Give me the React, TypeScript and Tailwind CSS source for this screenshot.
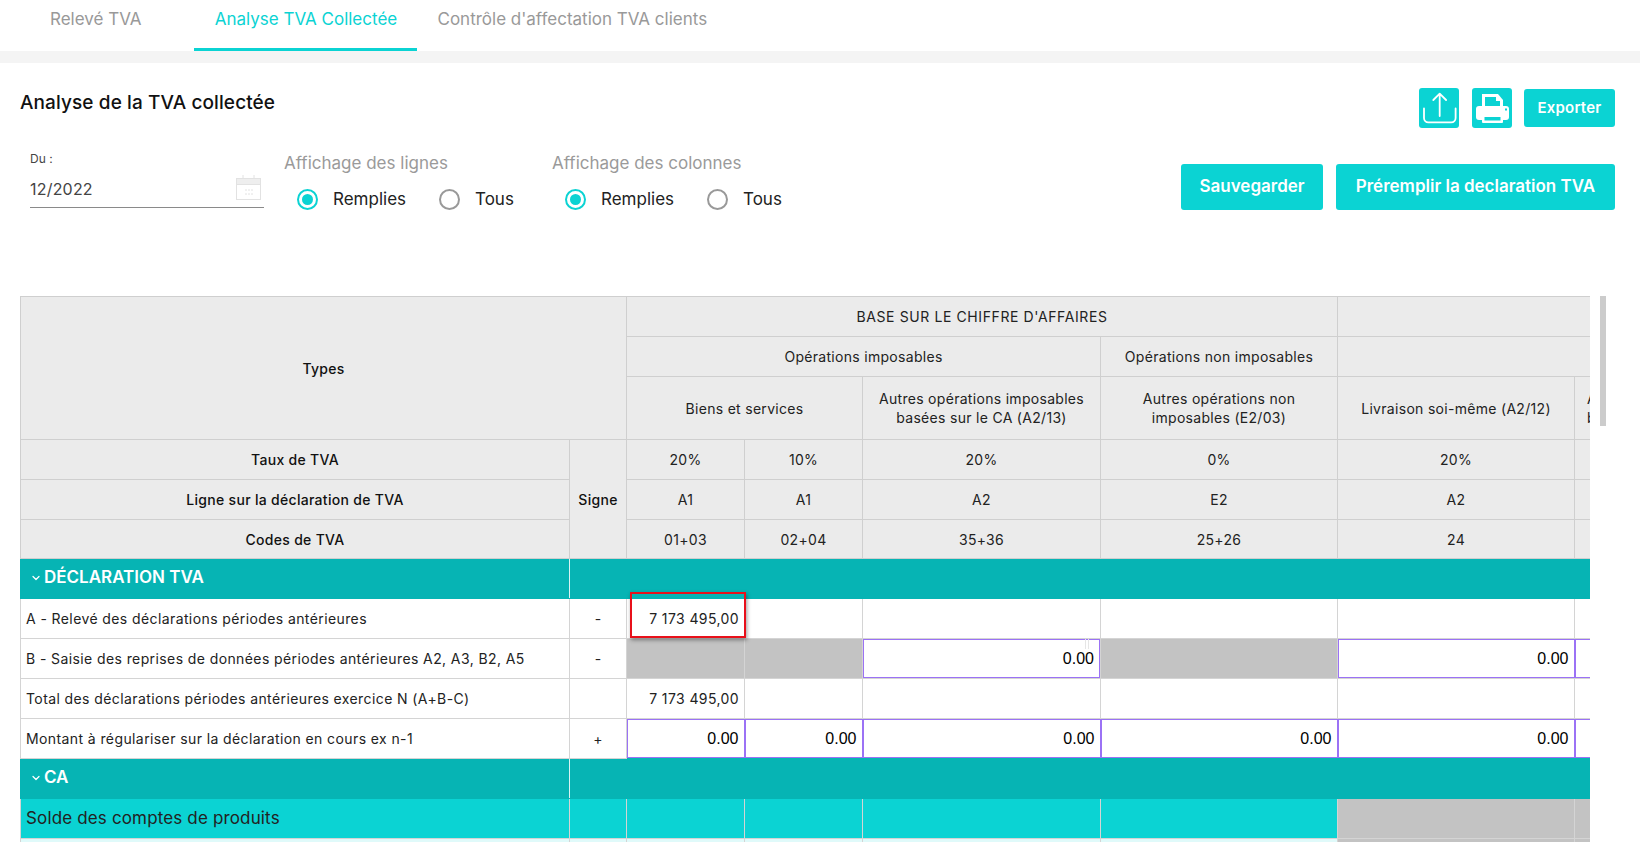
import React from 'react';
import { ChevronDown } from 'lucide-react';

const TEAL = 'bg-[#0bd3d3]';

const Radio = ({ label, checked }: { label: string; checked?: boolean }) => (
    <label className="flex items-center gap-[15px] text-[17px] text-[#222]">
        <span className={`flex h-[21px] w-[21px] items-center justify-center rounded-full border-2 ${checked ? 'border-[#0bd3d3]' : 'border-[#999]'}`}>
            {checked && <span className="h-[11px] w-[11px] rounded-full bg-[#0bd3d3]" />}
        </span>
        {label}
    </label>
);

const RadioGroup = ({ title, className }: { title: string; className: string }) => (
    <div className={className}>
        <div className="text-[17px] leading-[20px] text-[#9a9a9a]">{title}</div>
        <div className="mt-[14px] ml-[13px] flex items-center gap-[33px]">
            <Radio label="Remplies" checked />
            <Radio label="Tous" />
        </div>
    </div>
);

const CalendarIcon = () => (
    <svg width="26" height="26" viewBox="0 0 26 26" fill="none" stroke="#e2e2e2" strokeWidth="1">
        <rect x="0.5" y="3.5" width="24" height="21" />
        <rect x="0.5" y="3.5" width="24" height="6" fill="#eeeeee" />
        <path d="M7 0v4M18 0v4M9 15h2M12 15h2M15 15h2M9 19h2M12 19h2M15 19h2" />
    </svg>
);

const UploadIcon = () => (
    <svg width="40" height="40" viewBox="0 0 40 40" fill="none" stroke="#fff" strokeWidth="1.8" strokeLinecap="round" strokeLinejoin="round">
        <path d="M20.7 6v22M14.3 12l6.4-6.3 6.4 6.3" />
        <path d="M5 20.5v9.5a4.3 4.3 0 0 0 4.3 4.3h23a4.3 4.3 0 0 0 4.3-4.3v-9.5" />
    </svg>
);

const PrintIcon = () => (
    <svg width="40" height="40" viewBox="0 0 40 40">
        <path d="M10 6h16l5 6v9H10z" fill="#fff" />
        <path d="M13 9h11v4h4v7H13z" fill="#0bd3d3" />
        <rect x="4" y="18" width="33" height="14" rx="3" fill="#fff" />
        <rect x="10" y="25" width="21" height="10" rx="1" fill="#fff" />
        <rect x="12.5" y="29" width="16" height="3.5" fill="#0bd3d3" />
        <rect x="33" y="20.5" width="2" height="2" fill="#0bd3d3" />
    </svg>
);

const th = 'border border-[#cfcfcf] bg-[#ebebeb] px-1 text-center align-middle text-[14px] font-normal leading-[19px] tracking-[0.3px] text-[#222]';
const thStrong = 'border border-[#cfcfcf] bg-[#ebebeb] px-1 text-center align-middle text-[14px] font-medium leading-[19px] tracking-[0.3px] text-[#111]';
const td = 'border border-[#d4d4d4] bg-white px-[5px] align-middle text-[14px] tracking-[0.4px] text-[#222]';
const tdGrey = 'border border-[#d4d4d4] bg-[#c3c3c3]';
const tdSigne = 'border border-[#d4d4d4] bg-white text-center align-middle text-[14px] text-[#222]';
const tdSolde = 'border border-[#d4d4d4] bg-[#0bd3d3]';
const tdPale = 'border border-[#d4d4d4] bg-[#e0fafa]';

const AmountInput = ({ tick }: { tick?: boolean }) => (
    <td className="relative border-x-0 border-t border-b-0 border-[#d4d4d4] bg-white p-0">
        <input
            readOnly
            value="0.00"
            className="block h-[39px] w-full border border-[#9b72f5] bg-white pr-[5px] text-right text-[16px] text-black outline-none font-['Liberation_Sans',sans-serif]"
        />
        {/* small leftover mark on the top border in the capture */}
        {tick && <span className="absolute top-0 right-[11px] h-[10px] w-[4px] border-x border-[#e6e6e6]" />}
    </td>
);

const SectionRow = ({ title }: { title: string }) => (
    <tr className="h-[40px]">
        <td className="border border-[#06b4b4] border-r-[#d9f3f3] bg-[#06b4b4] pb-[2px] pl-[9px] text-white">
            <div className="flex items-center gap-[2px] text-[17px] font-semibold">
                <ChevronDown size={12} strokeWidth={2.5} />
                {title}
            </div>
        </td>
        <td colSpan={7} className="border border-[#06b4b4] bg-[#06b4b4]" />
    </tr>
);

const App: React.FC = () => {
    return (
        <div className="h-[842px] w-[1640px] overflow-hidden bg-white font-['Inter',sans-serif]">
            {/* Tabs */}
            <div className="flex h-[51px] pl-[30px] text-[17px]">
                <div className="flex h-full items-center px-5 pb-[11px] text-[#999]">Relevé TVA</div>
                <div className="ml-[33px] flex h-full w-[223px] items-center justify-center border-b-[3px] border-[#0bd3d3] pb-[8px] text-[#0bd3d3]">
                    Analyse TVA Collectée
                </div>
                <div className="flex h-full items-center px-5 pb-[11px] text-[#999]">Contrôle d'affectation TVA clients</div>
            </div>
            <div className="h-[12px] bg-[#f4f4f4]" />

            <div className="pt-[25px] pl-[20px]">
                {/* Title and icon buttons */}
                <div className="flex h-[40px] items-start justify-between pr-[25px]">
                    <h1 className="mt-[4px] text-[19px] leading-[22px] font-medium tracking-[0.1px] text-[#111]">Analyse de la TVA collectée</h1>
                    <div className="flex items-center">
                        <button className={`flex h-[40px] w-[40px] items-center justify-center rounded-[3px] ${TEAL}`}>
                            <UploadIcon />
                        </button>
                        <button className={`ml-[13px] flex h-[40px] w-[40px] items-center justify-center rounded-[3px] ${TEAL}`}>
                            <PrintIcon />
                        </button>
                        <button className={`ml-[12px] h-[38px] w-[91px] rounded-[3px] text-[15px] font-semibold tracking-[0.2px] text-white ${TEAL}`}>
                            Exporter
                        </button>
                    </div>
                </div>

                {/* Filters */}
                <div className="mt-[22px] flex h-[138px] items-start pr-[25px]">
                    <div className="ml-[10px] w-[234px]">
                        <div className="mt-[1px] text-[12px] leading-[16px] text-[#444]">Du :</div>
                        <div className="mt-[7px] flex h-[34px] items-center justify-between border-b border-[#8a8a8a] pr-[2px] pb-[3px] text-[16px] tracking-[0.2px] text-[#444]">
                            12/2022
                            <span className="-mt-[3px]">
                                <CalendarIcon />
                            </span>
                        </div>
                    </div>
                    <RadioGroup title="Affichage des lignes" className="mt-[3px] ml-[20px] w-[268px]" />
                    <RadioGroup title="Affichage des colonnes" className="mt-[3px]" />
                    <div className="mt-[14px] ml-auto flex gap-[13px]">
                        <button className={`h-[46px] w-[142px] rounded-[3px] text-[17px] font-semibold text-white ${TEAL}`}>Sauvegarder</button>
                        <button className={`h-[46px] w-[279px] rounded-[3px] text-[17px] font-semibold text-white ${TEAL}`}>
                            Préremplir la declaration TVA
                        </button>
                    </div>
                </div>

                {/* Table */}
                <div className="mt-[8px] flex items-start gap-[10px]">
                    <div className="w-[1570px] overflow-hidden">
                        <table className="w-[1791px] table-fixed border-collapse">
                            <colgroup>
                                <col className="w-[549px]" />
                                <col className="w-[57px]" />
                                <col className="w-[118px]" />
                                <col className="w-[118px]" />
                                <col className="w-[238px]" />
                                <col className="w-[237px]" />
                                <col className="w-[237px]" />
                                <col className="w-[237px]" />
                            </colgroup>
                            <thead>
                                <tr className="h-[40px]">
                                    <th rowSpan={3} colSpan={2} className={thStrong}>Types</th>
                                    <th colSpan={4} className={`${th} tracking-[0.6px]`}>BASE SUR LE CHIFFRE D'AFFAIRES</th>
                                    <th colSpan={2} className={th} />
                                </tr>
                                <tr className="h-[40px]">
                                    <th colSpan={3} className={th}>Opérations imposables</th>
                                    <th className={th}>Opérations non imposables</th>
                                    <th colSpan={2} className={th} />
                                </tr>
                                <tr className="h-[63px]">
                                    <th colSpan={2} className={th}>Biens et services</th>
                                    <th className={th}>Autres opérations imposables<br />basées sur le CA (A2/13)</th>
                                    <th className={th}>Autres opérations non<br />imposables (E2/03)</th>
                                    <th className={th}>Livraison soi-même (A2/12)</th>
                                    <th className={`${th} text-left pl-[12px]`}>Autres opérations<br />basées sur le CA</th>
                                </tr>
                                <tr className="h-[40px]">
                                    <th className={thStrong}>Taux de TVA</th>
                                    <th rowSpan={3} className={`${thStrong} px-0`}>Signe</th>
                                    <th className={th}>20%</th>
                                    <th className={th}>10%</th>
                                    <th className={th}>20%</th>
                                    <th className={th}>0%</th>
                                    <th className={th}>20%</th>
                                    <th className={th} />
                                </tr>
                                <tr className="h-[40px]">
                                    <th className={thStrong}>Ligne sur la déclaration de TVA</th>
                                    <th className={th}>A1</th>
                                    <th className={th}>A1</th>
                                    <th className={th}>A2</th>
                                    <th className={th}>E2</th>
                                    <th className={th}>A2</th>
                                    <th className={th} />
                                </tr>
                                <tr className="h-[39px]">
                                    <th className={thStrong}>Codes de TVA</th>
                                    <th className={th}>01+03</th>
                                    <th className={th}>02+04</th>
                                    <th className={th}>35+36</th>
                                    <th className={th}>25+26</th>
                                    <th className={th}>24</th>
                                    <th className={th} />
                                </tr>
                            </thead>
                            <tbody>
                                <SectionRow title="DÉCLARATION TVA" />
                                <tr className="h-[40px]">
                                    <td className={td}>A - Relevé des déclarations périodes antérieures</td>
                                    <td className={tdSigne}>-</td>
                                    <td className={`${td} relative text-right`}>
                                        7 173 495,00
                                        <span className="absolute -top-[7px] -right-[2px] bottom-0 left-[3px] border-2 border-[#e8101a] shadow-[1px_2px_4px_rgba(0,0,0,0.4)]" />
                                    </td>
                                    <td className={td} />
                                    <td className={td} />
                                    <td className={td} />
                                    <td className={td} />
                                    <td className={td} />
                                </tr>
                                <tr className="h-[40px]">
                                    <td className={td}>B - Saisie des reprises de données périodes antérieures A2, A3, B2, A5</td>
                                    <td className={tdSigne}>-</td>
                                    <td className={tdGrey} />
                                    <td className={tdGrey} />
                                    <AmountInput tick />
                                    <td className={tdGrey} />
                                    <AmountInput />
                                    <AmountInput />
                                </tr>
                                <tr className="h-[40px]">
                                    <td className={td}>Total des déclarations périodes antérieures exercice N (A+B-C)</td>
                                    <td className={tdSigne} />
                                    <td className={`${td} text-right`}>7 173 495,00</td>
                                    <td className={td} />
                                    <td className={td} />
                                    <td className={td} />
                                    <td className={td} />
                                    <td className={td} />
                                </tr>
                                <tr className="h-[40px]">
                                    <td className={td}>Montant à régulariser sur la déclaration en cours ex n-1</td>
                                    <td className={tdSigne}>+</td>
                                    <AmountInput />
                                    <AmountInput />
                                    <AmountInput />
                                    <AmountInput />
                                    <AmountInput />
                                    <AmountInput />
                                </tr>
                                <SectionRow title="CA" />
                                <tr className="h-[40px]">
                                    <td className={`${tdSolde} px-[5px] text-[17px] tracking-[0.15px] text-[#222]`}>Solde des comptes de produits</td>
                                    <td className={tdSolde} />
                                    <td className={tdSolde} />
                                    <td className={tdSolde} />
                                    <td className={tdSolde} />
                                    <td className={tdSolde} />
                                    <td className={tdGrey} />
                                    <td className={tdGrey} />
                                </tr>
                                <tr className="h-[40px]">
                                    <td className={tdPale} />
                                    <td className={tdPale} />
                                    <td className={tdPale} />
                                    <td className={tdPale} />
                                    <td className={tdPale} />
                                    <td className={tdPale} />
                                    <td className={tdGrey} />
                                    <td className={tdGrey} />
                                </tr>
                            </tbody>
                        </table>
                    </div>
                    <div className="h-[130px] w-[6px] bg-[#cccccc]" />
                </div>
            </div>
        </div>
    );
};

export default App;
